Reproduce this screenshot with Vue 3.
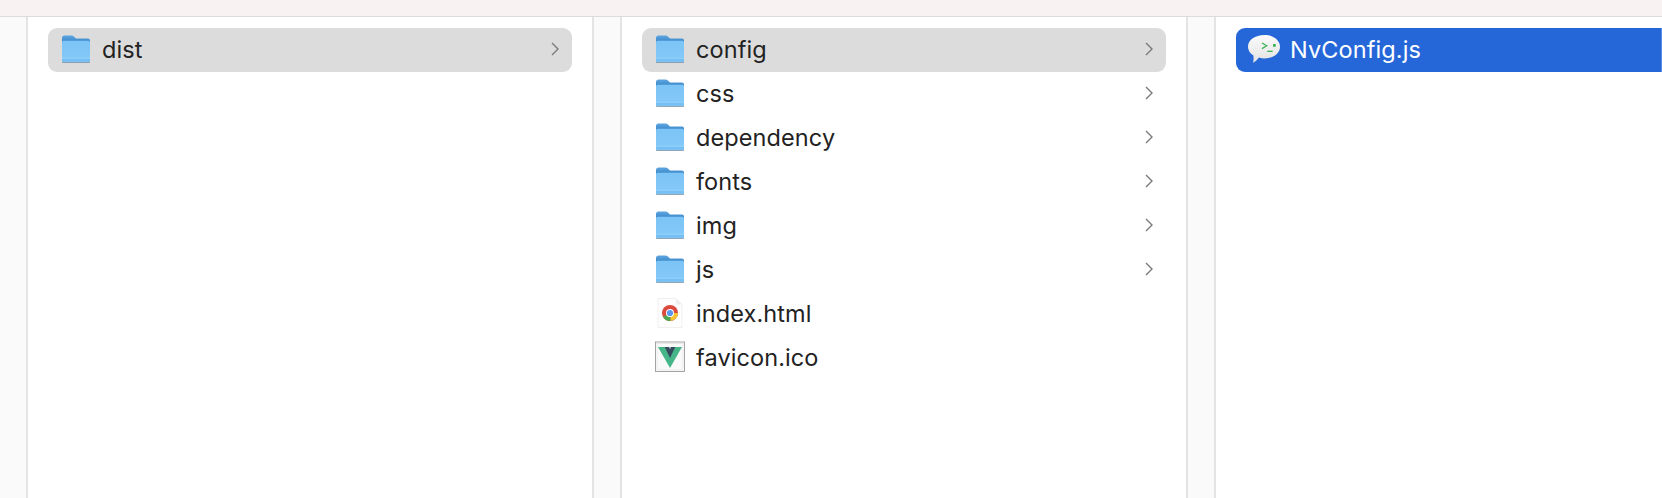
<script setup>
const folders = ['css', 'dependency', 'fonts', 'img', 'js']
</script>

<template>
  <div class="finder">
    <svg width="0" height="0" class="defs" aria-hidden="true">
      <defs>
        <linearGradient id="fback" x1="0" y1="0" x2="0" y2="1">
          <stop offset="0" stop-color="#5ba6e2" />
          <stop offset=".25" stop-color="#3f88ca" />
          <stop offset="1" stop-color="#3a7fc0" />
        </linearGradient>
        <linearGradient id="ffront" x1="0" y1="0" x2="0" y2="1">
          <stop offset="0" stop-color="#7cc4f6" />
          <stop offset="1" stop-color="#84c9f8" />
        </linearGradient>
        <linearGradient id="bub" x1="0" y1="0" x2="0" y2="1">
          <stop offset="0" stop-color="#fbfbfb" />
          <stop offset="1" stop-color="#e2e2e2" />
        </linearGradient>
        <symbol id="folder" viewBox="0 0 30 28" overflow="visible">
          <path d="M1 25V3C1 1.500 2 .5 3.500 .5h7c1 0 1.700.4 2.400 1.100L15 3.500H27c1.200 0 2 .8 2 2v19.500z" fill="url(#fback)" />
          <path d="M1 7.500C1 6.400 1.800 5.800 2.800 5.800H27.200C28.200 5.800 29 6.400 29 7.500V25.500C29 26.800 28.200 27.300 27 27.300H3C1.800 27.300 1 26.800 1 25.500z" fill="url(#ffront)" />
          <rect x="1" y="22.800" width="28" height=".9" fill="#a5d8f9" />
          <rect x="1" y="23.700" width="28" height="2.800" fill="#74bff3" />
          <path d="M1 26C1 26.900 1.800 27.300 3 27.300H27C28.200 27.300 29 26.900 29 26V26.900C29 27.700 28.200 28 27 28H3C1.800 28 1 27.700 1 26.900z" fill="#7a8c9c" />
        </symbol>
      </defs>
    </svg>
    <div class="topbar"></div>
    <div class="columns">
      <section class="column">
        <div class="row selected">
          <svg class="icon"><use href="#folder" /></svg>
          <span class="name">dist</span>
          <svg class="chev" viewBox="0 0 8 14"><path d="M1 1l6 6-6 6" /></svg>
        </div>
      </section>
      <section class="column">
        <div class="row selected">
          <svg class="icon"><use href="#folder" /></svg>
          <span class="name">config</span>
          <svg class="chev" viewBox="0 0 8 14"><path d="M1 1l6 6-6 6" /></svg>
        </div>
        <div v-for="f in folders" :key="f" class="row">
          <svg class="icon"><use href="#folder" /></svg>
          <span class="name">{{ f }}</span>
          <svg class="chev" viewBox="0 0 8 14"><path d="M1 1l6 6-6 6" /></svg>
        </div>
        <div class="row">
          <svg class="icon" viewBox="0 0 30 28">
            <path d="M3 -.5H21L27 5.500V28.500H3z" fill="#fefefe" stroke="#e9e9e9" stroke-width=".7" />
            <path d="M21 -.5V5.500H27z" fill="#eeeeee" />
            <circle cx="15" cy="14" r="8" fill="#dc4a3d" />
            <path d="M15 14L8.070 18A8 8 0 0 0 15.800 21.960z" fill="#4ca851" />
            <path d="M15 14H23A8 8 0 0 1 15.800 21.960z" fill="#f6c530" />
            <circle cx="15" cy="14" r="4" fill="#fff" />
            <circle cx="15" cy="14" r="3.100" fill="#5a95ee" />
          </svg>
          <span class="name">index.html</span>
        </div>
        <div class="row">
          <svg class="icon" viewBox="0 0 30 28">
            <rect x=".5" y="-1" width="29" height="29.500" fill="#fff" stroke="#9a9a9a" stroke-width=".9" />
            <rect x="2" y=".5" width="26" height="26.500" fill="#fafafa" stroke="#dcdcdc" stroke-width=".6" />
            <path d="M3 4H27L15 25z" fill="#46b588" />
            <path d="M9.800 4H20.200L15 15z" fill="#34495e" />
            <path d="M13.800 4H16.200L15 6.500z" fill="#a9b3bb" />
          </svg>
          <span class="name">favicon.ico</span>
        </div>
      </section>
      <section class="column last">
        <div class="row file-selected">
          <svg class="bubble" viewBox="0 0 32 28">
            <path d="M16.500 0C25.300 0 32 5 32 11.700C32 18.400 25.300 23.400 16.500 23.400C14.500 23.400 12.700 23.100 11 22.500C9 25 6.500 27.300 5 27.800C5.500 25.800 5.800 23.400 5.400 20.500C2 18.400 0 15.300 0 11.700C0 5 7 0 16.500 0z" fill="url(#bub)" />
            <path d="M14 8L18.700 10.800L14 13.600" fill="none" stroke="#3cb554" stroke-width="1.300" />
            <rect x="25" y="9" width="2.800" height="2.800" fill="#3cb554" />
            <rect x="19.200" y="15.700" width="5.500" height="1.300" fill="#3cb554" />
          </svg>
          <span class="name">NvConfig.js</span>
        </div>
      </section>
    </div>
  </div>
</template>

<style scoped>
.finder {
  width: 1662px;
  height: 498px;
  overflow: hidden;
  background: #fff;
  font-family: Inter, "Liberation Sans", sans-serif;
}
.defs {
  position: absolute;
}
.topbar {
  height: 16px;
  background: #f8f3f2;
  border-bottom: 1px solid #dcdcdc;
}
.columns {
  display: flex;
  height: 481px;
}
.column {
  box-sizing: border-box;
  width: 594px;
  flex: none;
  padding: 11px 20px 0 48px;
  background: linear-gradient(90deg, #fafafa 26px, #e4e4e4 26px, #e4e4e4 28px, #fff 28px);
  border-right: 2px solid #e4e4e4;
}
.last {
  flex: 1;
  width: auto;
  padding-right: 0;
  border-right: 0;
}
.row {
  box-sizing: border-box;
  display: flex;
  align-items: center;
  height: 44px;
  padding: 0 13px 2px;
  color: #222;
  font-size: 23.500px;
  letter-spacing: 0.1px;
}
.selected {
  background: #dcdcdc;
  border-radius: 9px;
}
.file-selected {
  background: #2567d9;
  border-radius: 9px 0 0 9px;
  border-right: 1px solid #5a8ce2;
  color: #fff;
  padding-left: 12px;
}
.icon {
  width: 30px;
  height: 28px;
  flex: none;
  margin-right: 11px;
  overflow: visible;
}
.bubble {
  width: 32px;
  height: 28px;
  flex: none;
  margin-right: 10px;
  overflow: visible;
}
.name {
  flex: 1;
}
.chev {
  width: 8px;
  height: 14px;
  flex: none;
  fill: none;
  stroke: #7a7a7a;
  stroke-width: 1.400;
}
</style>
